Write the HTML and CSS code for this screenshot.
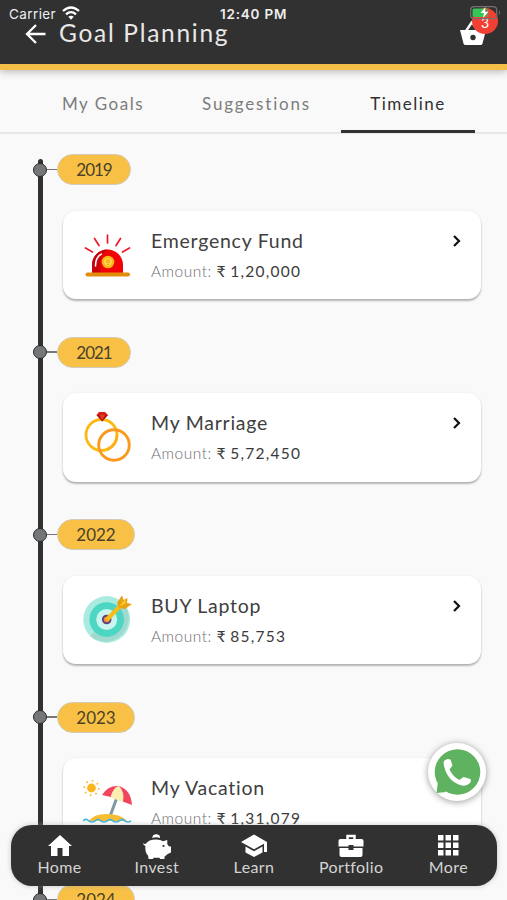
FILE: index.html
```
<!DOCTYPE html>
<html lang="en">
<head>
  <meta charset="UTF-8">
  <meta name="viewport" content="width=device-width, initial-scale=1.0">
  <title>Goal Planning</title>
  <link rel="stylesheet" href="styles.css">
</head>
<body>
  <header class="header">
    <svg class="back" viewBox="0 0 22 20"><path d="M20.500 10H2M11 1L2 10l9 9" fill="none" stroke="#fff" stroke-width="2.3"/></svg>
    <h1>Goal Planning</h1>
    <div class="cart">
      <svg viewBox="0 0 28 26"><path d="M7 10L13 1l6 9" fill="none" stroke="#fff" stroke-width="2.4"/><path d="M1 9h26l-3.500 13.500Q23 24 21.500 24h-15Q5 24 4.500 22.500z" fill="#fff"/><circle cx="14" cy="16.500" r="2.700" fill="#313131"/></svg>
      <span class="badge">3</span>
    </div>
    <!-- phone status bar -->
    <div class="status">
      <span class="carrier">Carrier</span>
      <svg class="wifi" viewBox="0 0 18 14"><g fill="none" stroke="#fff" stroke-width="2.300"><path d="M1 5Q9-2 17 5"/><path d="M4 8.300q5-4.300 10 0"/></g><path d="M6.300 10.800q2.700-2.200 5.400 0L9 13.700z" fill="#fff"/></svg>
      <span class="time">12:40 PM</span>
      <svg class="battery" viewBox="0 0 31 14"><rect x=".7" y=".7" width="26" height="12" rx="3.500" fill="none" stroke="#77706f" stroke-width="1.200"/><path d="M29 4.500q2 2 0 4.500z" fill="#77706f"/><path d="M4 2.500h11.500v8.500H4Q2.500 11 2.500 9.500V4Q2.500 2.500 4 2.500z" fill="#35c759"/><path d="M15.500 2.500h3v8.500h-3z" fill="#8b8547"/><path d="M15.500 1l-5 6h3.500l-1 5 5.500-6.300H15z" fill="#fff"/></svg>
    </div>
  </header>

  <nav class="tabs">
    <a class="tab">My Goals</a>
    <a class="tab tab-mid">Suggestions</a>
    <a class="tab active">Timeline</a>
  </nav>

  <main class="timeline">
    <section class="item">
      <div class="year-row"><span class="dot"></span><span class="dash"></span><span class="year narrow">2019</span></div>
      <div class="card">
        <svg class="icon" viewBox="0 0 50 50">
          <g stroke="#f01830" stroke-width="1.700" stroke-linecap="round"><path d="M24.500 4v8M11.500 7.500l4.500 7M37.500 7.500l-4.500 7M2.500 17l7 4M46.500 17l-7 4"/></g>
          <path d="M9 42V34a15.500 15.500 0 0 1 31 0v8z" fill="#f00207"/><path d="M9 42V34a15.500 15.500 0 0 1 15.500-15.500Q14 25 18 42z" fill="#c8000a"/>
          <path d="M12.500 35q0-9 6-12" stroke="#fff" stroke-width="1.500" fill="none" stroke-linecap="round"/>
          <circle cx="25" cy="31" r="6.300" fill="#fdb613"/><circle cx="25" cy="31" r="4" fill="#ffd348"/><path d="M23 29h4M23 31h4M24 33l2 1" stroke="#f19a08" stroke-width="1"/>
          <rect x="2.500" y="41.500" width="44.500" height="4" rx="2" fill="#e18c0b"/>
        </svg>
        <div class="info"><h2>Emergency Fund</h2><p>Amount: <b>₹ <span>1,20,000</span></b></p></div>
        <svg class="arrow" viewBox="0 0 10 14"><path d="M2 2l5 5-5 5" fill="none" stroke="#111" stroke-width="2.200"/></svg>
      </div>
    </section>

    <section class="item">
      <div class="year-row"><span class="dot"></span><span class="dash"></span><span class="year narrow">2021</span></div>
      <div class="card">
        <svg class="icon rings" viewBox="0 0 50 52">
          <circle cx="18.500" cy="24" r="15.500" fill="none" stroke="#fdb913" stroke-width="2.800"/>
          <circle cx="31" cy="34" r="15.300" fill="none" stroke="#fb991f" stroke-width="2.900"/>
          <path d="M34 23.500A15.500 15.500 0 0 1 24 38.500" fill="none" stroke="#fdb013" stroke-width="2.800"/>
          <path d="M13.500 4l2.500-3h6l3 3-5.800 6.500z" fill="#d42018"/><path d="M13.500 4h11.500l-5.800 6.500z" fill="#ac1712"/><path d="M16.500 4l2.700 5L22 4z" fill="#e93b26"/>
        </svg>
        <div class="info"><h2>My Marriage</h2><p>Amount: <b>₹ <span>5,72,450</span></b></p></div>
        <svg class="arrow" viewBox="0 0 10 14"><path d="M2 2l5 5-5 5" fill="none" stroke="#111" stroke-width="2.200"/></svg>
      </div>
    </section>

    <section class="item">
      <div class="year-row"><span class="dot"></span><span class="dash"></span><span class="year">2022</span></div>
      <div class="card">
        <svg class="icon" viewBox="0 3 50 50">
          <circle cx="23.700" cy="26.500" r="23.400" fill="#a9ecdf"/><path d="M40 10a23.400 23.400 0 0 1-33 33z" fill="#a0d9cf"/>
          <circle cx="23.700" cy="26.500" r="17.300" fill="#4dd6c3"/><circle cx="23.700" cy="26.500" r="10.500" fill="#c8f5ef"/>
          <circle cx="23.700" cy="26.500" r="3.800" fill="#f68b42" stroke="#684379" stroke-width="2"/>
          <path d="M23.500 27L41 9" stroke="#f9bb18" stroke-width="4.300"/>
          <path d="M34 10l5-8 1.500 5 4-2-.5 5 5 1-7 5-6-1z" fill="#e7a313"/><path d="M36 14l6-8 1 4z" fill="#fdc72e"/>
        </svg>
        <div class="info"><h2>BUY Laptop</h2><p>Amount: <b>₹ <span>85,753</span></b></p></div>
        <svg class="arrow" viewBox="0 0 10 14"><path d="M2 2l5 5-5 5" fill="none" stroke="#111" stroke-width="2.200"/></svg>
      </div>
    </section>

    <section class="item">
      <div class="year-row"><span class="dot"></span><span class="dash"></span><span class="year">2023</span></div>
      <div class="card">
        <svg class="icon" viewBox="0 1 50 50">
          <circle cx="8.500" cy="11" r="4.400" fill="#fbb51d"/><circle cx="8.500" cy="11" r="7.300" fill="none" stroke="#fbb51d" stroke-width="1.600" stroke-dasharray="1.600 4.130"/>
          <path d="M34.500 19l-7 19" stroke="#8198a2" stroke-width="3"/>
          <path d="M19 18Q25 8 36 9q12 4 13 19l-8-3-11-4.500z" fill="#f2455e"/><path d="M27.500 20.500Q30 10 36 9q6 6 4 16z" fill="#fbeeb0"/>
          <path d="M6 44Q10 37 24 37q14 0 20 7z" fill="#f8bd31"/>
          <path d="M0 44q3-3 6 0 3 2 6 0 3-3 6 0 3 2 6 0 3-3 6 0 3 2 6 0 3-3 6 0 3 2 6 0" fill="none" stroke="#44b8dd" stroke-width="1.700"/>
        </svg>
        <div class="info"><h2>My Vacation</h2><p>Amount: <b>₹ <span>1,31,079</span></b></p></div>
      </div>
    </section>

    <section class="item">
      <div class="year-row"><span class="dot"></span><span class="dash"></span><span class="year">2024</span></div>
    </section>
  </main>

  <!-- WhatsApp button -->
  <a class="whatsapp">
    <svg viewBox="0 0 48 48"><circle cx="24.500" cy="24" r="22.800" fill="#5fb25f"/><path d="M3.500 45L5 34l8 10z" fill="#5fb25f"/><path d="M10.500 15q0-3 4-4l3 .5 2 6-3 4q4 8 10 10.500l4-3 7 2q1 2-.5 4-4 4-10 2Q13 32 10.500 15z" fill="#fff"/></svg>
  </a>

  <nav class="bottom-nav">
    <a><svg viewBox="0 0 28 28"><path d="M14 3l12 11h-3v10h-6.500v-8h-5v8H5V14H2z"/></svg><span>Home</span></a>
    <a><svg class="pig" viewBox="0 0 32 30"><path d="M11 6.500a4.200 4.200 0 0 1 8.400 0Q15 5 11 6.500z"/><path d="M3.500 15Q1 14 1 11.500q1 1.500 3 1.200Q7 8 15 8q5 0 7.500 2L27 8.500v4.500l2 2.500h2V22l-3.500 1.500-3.500 3V29h-4.500l-1-1.500h-6l-1 1.500H7l-.500-3.500Q3 22 3.500 15z"/><circle cx="23" cy="15" r="1.200" fill="#313131"/></svg><span>Invest</span></a>
    <a><svg viewBox="0 0 28 28"><path d="M14 2.500L1 10l13 7.300 10-5.600V20h3V10z"/><path d="M5.500 14.500v6L14 25l8.500-4.500v-6L14 19.300z"/></svg><span>Learn</span></a>
    <a><svg viewBox="0 0 28 28"><path d="M10.500 7V4h7v3" fill="none" stroke="#fff" stroke-width="2.500"/><path d="M3.500 7h21q2 0 2 2v5.500h-10V13h-5v1.500h-10V9q0-2 2-2zM2.500 16h9v2h5v-2h9v7q0 2-2 2h-19q-2 0-2-2z"/></svg><span>Portfolio</span></a>
    <a><svg viewBox="0 0 28 28"><path d="M4 3h5.500v5.500H4zM11.500 3h5.500v5.500h-5.500zM19 3h5.500v5.500H19zM4 10.500h5.500V16H4zM11.500 10.500h5.500V16h-5.500zM19 10.500h5.500V16H19zM4 18h5.500v5.500H4zM11.500 18h5.500v5.500h-5.500zM19 18h5.500v5.500H19z"/></svg><span>More</span></a>
  </nav>
</body>
</html>
```
FILE: styles.css
```
* {
  box-sizing: border-box;
}

body {
  margin: 0;
  height: 900px;
  overflow: hidden;
  position: relative;
  background: #f9f9f9;
  font-family: Lato, "Noto Sans", sans-serif;
  color: #333;
}

h1, h2, p {
  margin: 0;
  font-weight: 400;
}

svg {
  display: block;
}

.header {
  position: relative;
  display: flex;
  align-items: flex-start;
  height: 70px;
  padding: 18px 20px 0 25px;
  background: #313131;
  border-bottom: 6px solid #f5be49;
  box-shadow: 0 2px 7px rgba(0, 0, 0, 0.25);
}

.back {
  width: 22px;
  height: 20px;
  margin-top: 6px;
}

.header h1 {
  margin-left: 12px;
  font-size: 24.500px;
  line-height: 29px;
  letter-spacing: 1.7px;
  color: #e8e8e8;
}

.cart {
  position: relative;
  width: 28px;
  margin-left: auto;
  margin-top: 3px;
}

.badge {
  position: absolute;
  left: 13px;
  top: -13px;
  width: 26px;
  height: 26px;
  border-radius: 50%;
  background: #f23f34;
  color: #fff;
  font-size: 14px;
  line-height: 29px;
  text-align: center;
}

.status {
  position: absolute;
  left: 9px;
  right: 6px;
  top: 6px;
  display: flex;
  font-family: Inter, sans-serif;
  font-size: 13.500px;
  line-height: 16px;
  color: #eee;
}

.carrier {
  width: 47px;
  letter-spacing: 0.4px;
}

.wifi {
  width: 18px;
  height: 14px;
  margin-left: 6px;
}

.time {
  margin-left: 140px;
  font-size: 13.500px;
  font-weight: 600;
  letter-spacing: 0.8px;
}

.battery {
  width: 31px;
  height: 14px;
  margin-left: auto;
}

.tabs {
  display: flex;
  height: 64px;
  padding: 0 32px 0 36px;
  border-bottom: 2px solid #e8e8e8;
}

.tab {
  width: 134px;
  height: 63px;
  font-size: 17px;
  line-height: 67px;
  letter-spacing: 1.5px;
  text-align: center;
  color: #7c7c7c;
}

.tab-mid {
  width: 171px;
  padding-left: 2px;
  letter-spacing: 1.8px;
}

.tab.active {
  color: #303030;
  border-bottom: 3px solid #313131;
}

.timeline {
  position: relative;
  height: 766px;
  overflow: hidden;
  padding: 20px 26px 0 33px;
}

/* vertical line behind the dots */
.timeline::before {
  content: "";
  position: absolute;
  left: 38px;
  top: 25px;
  width: 4.500px;
  height: 760px;
  border-radius: 3px;
  background: #313131;
}

.item {
  position: relative;
  height: 182.500px;
}

.year-row {
  display: flex;
  align-items: center;
  height: 31px;
}

.dot {
  width: 14px;
  height: 14px;
  border: 1.500px solid #292929;
  border-radius: 50%;
  background: #74777a;
}

.dash {
  width: 10px;
  height: 1.500px;
  background: #777;
}

.year {
  width: 78px;
  height: 31px;
  border: 1px solid #d2cbbb;
  border-radius: 16px;
  background: #f8c145;
  font-size: 17px;
  line-height: 30px;
  text-align: center;
  color: #4a4129;
}

.year.narrow {
  width: 74px;
  letter-spacing: -1px;
}

.card {
  display: flex;
  align-items: flex-start;
  height: 88.500px;
  margin: 25.500px 0 0 30px;
  padding: 18px 19px 0 20px;
  background: #fff;
  border-radius: 13px;
  box-shadow: 0 2px 2px rgba(0, 0, 0, 0.27), 0 0 2px rgba(0, 0, 0, 0.08);
}

.icon {
  width: 50px;
  height: 50px;
  margin-top: 2px;
}

.icon.rings {
  height: 52px;
  margin-top: 0;
}

.info {
  margin-left: 18px;
}

.info h2 {
  font-size: 19.500px;
  line-height: 24px;
  letter-spacing: 0.75px;
  color: #404040;
}

.info p {
  margin-top: 8px;
  font-size: 15.500px;
  font-weight: 300;
  line-height: 20px;
  letter-spacing: 0.5px;
  color: #6e6e6e;
}

.info b {
  font-weight: 400;
  color: #3a3a3a;
}

.info b span {
  letter-spacing: 1.25px;
}

.arrow {
  width: 10px;
  height: 14px;
  margin: 5px 0 0 auto;
}

.whatsapp {
  position: absolute;
  left: 428px;
  top: 743px;
  width: 58px;
  height: 58px;
  padding: 5px;
  border-radius: 50%;
  background: #fff;
  box-shadow: 0 1px 7px rgba(0, 0, 0, 0.4);
}

.bottom-nav {
  position: absolute;
  left: 11px;
  top: 825px;
  display: flex;
  width: 486px;
  height: 61px;
  border-radius: 21px;
  background: #313131;
  box-shadow: 0 0 5px rgba(160, 160, 160, 0.6);
}

.bottom-nav a {
  flex: 1;
  display: flex;
  flex-direction: column;
  align-items: center;
  padding-top: 7px;
  font-size: 16px;
  line-height: 18px;
  letter-spacing: 0.4px;
  color: #d4d4d4;
}

.bottom-nav svg {
  width: 28px;
  height: 28px;
  margin-bottom: -2px;
  fill: #fff;
}

.bottom-nav .pig {
  width: 32px;
}
```
